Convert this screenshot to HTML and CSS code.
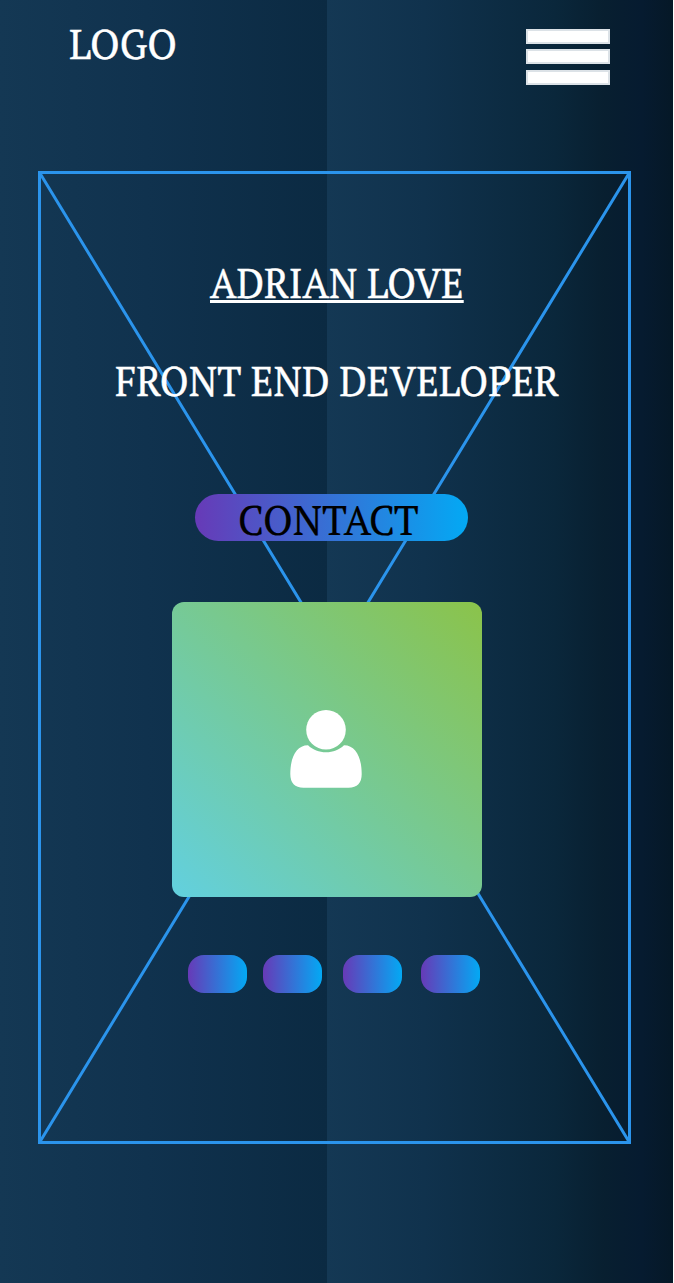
FILE: index.html
```html
<!DOCTYPE html>
<html lang="en">
<head>
<meta charset="utf-8">
<title>Adrian Love</title>
<link rel="stylesheet" href="styles.css">
</head>
<body>
<div class="page">
  <header class="header">
    <div class="text logo">LOGO</div>
    <div class="menu"><span class="bar"></span><span class="bar"></span><span class="bar bar-last"></span></div>
  </header>
  <main class="hero">
    <svg class="diagonals" viewBox="0 0 593 973">
      <path d="M1.5 1.5L591.5 971.5M591.5 1.5L1.5 971.5" fill="none" stroke="#2b94ec" stroke-width="3"/>
    </svg>
    <h1 class="text name">ADRIAN LOVE</h1>
    <h2 class="text role">FRONT END DEVELOPER</h2>
    <a class="contact"><span class="text contact-label">CONTACT</span></a>
    <div class="photo">
      <svg class="person" viewBox="0 0 72 78">
        <circle cx="36" cy="19.8" r="19.8" fill="#fff"/>
        <path d="M18 35.2C23 40 29 42.200 36 42.200S49 40 54 35.200C66 35.200 71.700 48 71.700 64Q71.700 77.700 58.500 77.700H13.500Q.3 77.700 .3 64C.3 48 6 35.200 18 35.200Z" fill="#fff"/>
      </svg>
    </div>
    <div class="links"><span class="pill"></span><span class="pill"></span><span class="pill"></span><span class="pill"></span></div>
  </main>
</div>
</body>
</html>
```

FILE: styles.css
```css
* { box-sizing: border-box; }
body { margin: 0; background: #fff; }
.page {
  width: 673px;
  height: 1283px;
  background:
    linear-gradient(90deg, #143854, #10324e 45%, #0b2a42) 0 0 / 327px 100% no-repeat,
    linear-gradient(90deg, #143854, #10324d 28%, #0a273b 66%, #081f30 80%, #061b30 91%, #051827) 327px 0 / 346px 100% no-repeat;
}
.header {
  display: flex;
  justify-content: space-between;
  align-items: flex-start;
  height: 171px;
  padding: 20px 63px 0 69px;
}
.text {
  margin: 0;
  font: 400 41px/47px "PT Serif", "Liberation Serif", serif;
  white-space: nowrap;
  color: #fff;
  -webkit-text-stroke: 0.4px currentColor;
}
.logo { transform: scaleX(0.978); transform-origin: left; }
.menu { display: flex; flex-direction: column; gap: 5px; padding-top: 9px; }
.bar { width: 84px; height: 15px; background: #fff; border: 2px solid #dce2e7; }
.bar-last { margin-top: 1px; }
.hero {
  position: relative;
  display: flex;
  flex-direction: column;
  width: 593px;
  height: 973px;
  margin-left: 38px;
  padding-top: 85px;
  border: 3px solid #2b94ec;
}
.diagonals { position: absolute; top: -3px; left: -3px; width: 593px; height: 973px; }
.name, .role, .contact, .photo, .links { z-index: 1; }
.name {
  align-self: flex-start;
  margin-left: 169px;
  text-decoration: underline;
  text-decoration-thickness: 3px;
  text-underline-offset: 2px;
  transform: scaleX(0.948);
  transform-origin: left;
}
.role {
  align-self: flex-start;
  margin: 51px 0 0 74px;
  transform: scaleX(0.951);
  transform-origin: left;
}
.contact {
  display: flex;
  width: 273px;
  height: 47px;
  margin: 90px 0 0 154px;
  padding: 2px 0 0 43px;
  border-radius: 24px;
  background: linear-gradient(90deg, #673ab7, #03a9f4);
}
.contact-label { color: #000; transform: scaleX(0.98); transform-origin: left; -webkit-text-stroke-width: 0.2px; }
.photo {
  display: flex;
  width: 310px;
  height: 295px;
  margin: 61px 0 0 131px;
  padding: 108px 0 0 118px;
  border-radius: 12px;
  background: linear-gradient(45deg, #62d0df, #8bc34a);
}
.person { width: 72px; height: 78px; }
.links {
  display: grid;
  grid-template-columns: 75px 80px 78px 59px;
  margin: 58px 0 0 147px;
}
.pill { width: 59px; height: 38px; border-radius: 16px; background: linear-gradient(90deg, #673ab7, #03a9f4); }
```
